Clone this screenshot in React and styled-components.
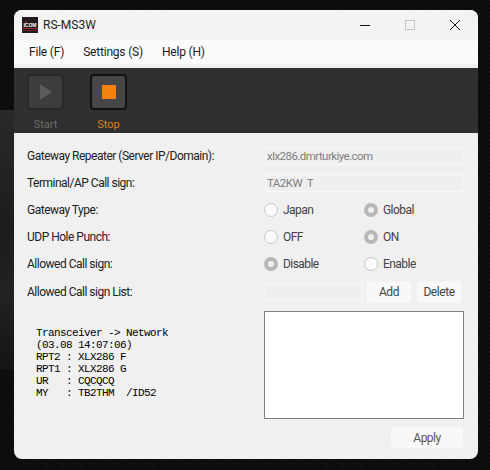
import React from 'react';
import styled, {createGlobalStyle} from 'styled-components'

const GlobalStyle = createGlobalStyle`
	html, body {
		margin: 0;
		padding: 0;
		width: 490px;
		height: 470px;
		overflow: hidden;
		background-color: #0d0d0d;
		background-image:
			linear-gradient(170deg, #2a2a2a, #1c1c1c 45%, #222 70%, #141414),
			repeating-linear-gradient(45deg, #111 0 1px, #0b0b0b 1px 3px);
		background-size: 14px 260px, auto;
		background-position: 0 110px, 0 0;
		background-repeat: no-repeat, repeat;
		font-family: Roboto, "Liberation Sans", sans-serif;
		font-size: 12px;
	}
`

const LOG_LINES = [
	'Transceiver -> Network',
	'(03.08 14:07:06)',
	'RPT2 : XLX286 F',
	'RPT1 : XLX286 G',
	'UR   : CQCQCQ',
	'MY   : TB2THM  /ID52',
]

const IcomLogo = () => (
	<svg width="16" height="16" viewBox="0 0 16 16">
		<rect width="16" height="16" fill="#231a1d" />
		<rect x="0" y="11" width="16" height="1" fill="#a3242c" />
		<rect x="0" y="13" width="16" height="1" fill="#6f1d24" />
		<circle cx="4" cy="5" r="0.8" fill="#d8343c" />
		<text x="8" y="10" textAnchor="middle" fontSize="5" fontWeight="700" fontFamily="Liberation Sans, sans-serif" fill="#fff">ICOM</text>
	</svg>
)

const Radio = ({label, checked}) => (
	<RadioItem>
		<RadioDot $checked={checked} />
		<RadioText>{label}</RadioText>
	</RadioItem>
)

const App = () => {
	return (
		<>
			<GlobalStyle />
			<Window>
				<TitleBar>
					<TitleLeft>
						<IcomLogo />
						<TitleText>RS-MS3W</TitleText>
					</TitleLeft>
					<WindowControls>
						<svg width="10" height="10" viewBox="0 0 10 10"><path d="M0 5.5H10" stroke="#111" strokeWidth="1" /></svg>
						<svg width="10" height="10" viewBox="0 0 10 10"><rect x="0.5" y="0.5" width="9" height="9" fill="none" stroke="#c4c4c4" /></svg>
						<svg width="10" height="10" viewBox="0 0 10 10"><path d="M0 0L10 10M10 0L0 10" stroke="#111" strokeWidth="1" /></svg>
					</WindowControls>
				</TitleBar>

				<MenuBar>
					<MenuItem>File (F)</MenuItem>
					<MenuItem>Settings (S)</MenuItem>
					<MenuItem>Help (H)</MenuItem>
				</MenuBar>

				<Toolbar>
					<ToolItem>
						<ToolButton>
							<svg width="12" height="16" viewBox="0 0 12 16"><path d="M0 0L12 8L0 16Z" fill="#5a5a5a" /></svg>
						</ToolButton>
						<ToolLabel>Start</ToolLabel>
					</ToolItem>
					<ToolItem>
						<ToolButton $active>
							<StopSquare />
						</ToolButton>
						<ToolLabel $active>Stop</ToolLabel>
					</ToolItem>
				</Toolbar>

				<Content>
					<Row>
						<Label>Gateway Repeater (Server IP/Domain):</Label>
						<FieldBox>xlx286.dmrturkiye.com</FieldBox>
					</Row>
					<Row>
						<Label>Terminal/AP Call sign:</Label>
						<FieldBox>TA2KW&nbsp;&nbsp;T</FieldBox>
					</Row>
					<Row>
						<Label>Gateway Type:</Label>
						<RadioGroup>
							<Radio label="Japan" />
							<Radio label="Global" checked />
						</RadioGroup>
					</Row>
					<Row>
						<Label>UDP Hole Punch:</Label>
						<RadioGroup>
							<Radio label="OFF" />
							<Radio label="ON" checked />
						</RadioGroup>
					</Row>
					<Row>
						<Label>Allowed Call sign:</Label>
						<RadioGroup>
							<Radio label="Disable" checked />
							<Radio label="Enable" />
						</RadioGroup>
					</Row>
					<Row>
						<Label>Allowed Call sign List:</Label>
						<ListControls>
							<ListField />
							<SmallButton>Add</SmallButton>
							<SmallButton>Delete</SmallButton>
						</ListControls>
					</Row>

					<LogArea>
						<LogText>
							{LOG_LINES.map(line => <div key={line}>{line}</div>)}
						</LogText>
						<ListBox />
					</LogArea>

					<Footer>
						<ApplyButton>Apply</ApplyButton>
					</Footer>
				</Content>
			</Window>
		</>
	);
};

const Window = styled.div`
	margin: 10px 0 0 14px;
	width: 464px;
	height: 449px;
	border-radius: 8px;
	overflow: hidden;
	display: flex;
	flex-direction: column;
	background-color: #f0f0f0;
`

const TitleBar = styled.div`
	height: 30px;
	flex: none;
	display: flex;
	align-items: center;
	justify-content: space-between;
	padding: 0 18px 0 8px;
	background-color: #f3f3f3;
`

const TitleLeft = styled.div`
	display: flex;
	align-items: center;
	gap: 5px;
`

const TitleText = styled.span`
	font-size: 12px;
	color: #222;
`

const WindowControls = styled.div`
	display: flex;
	align-items: center;
	gap: 35px;
`

const MenuBar = styled.div`
	height: 24px;
	flex: none;
	display: flex;
	align-items: center;
	gap: 19px;
	padding-left: 15px;
	margin-bottom: 4px;
	background-color: #fafafa;
`

const MenuItem = styled.span`
	font-size: 12px;
	letter-spacing: -0.2px;
	color: #1c1c1c;
`

const Toolbar = styled.div`
	height: 65px;
	flex: none;
	display: flex;
	gap: 26px;
	padding: 6px 0 0 13px;
	box-sizing: border-box;
	background-color: #303030;
`

const ToolItem = styled.div`
	width: 37px;
	display: flex;
	flex-direction: column;
	align-items: center;
	gap: 8px;
`

const ToolButton = styled.div`
	width: 37px;
	height: 36px;
	box-sizing: border-box;
	display: flex;
	align-items: center;
	justify-content: center;
	border-radius: 4px;
	background-color: ${p => p.$active ? '#474747' : '#3d3d3d'};
	border: 2px solid ${p => p.$active ? '#111' : '#292929'};
`

const StopSquare = styled.div`
	width: 14px;
	height: 14px;
	background-color: #f58113;
`

const ToolLabel = styled.span`
	font-size: 11px;
	color: ${p => p.$active ? '#d9801f' : '#6e6e6e'};
`

const Content = styled.div`
	flex: 1;
	padding: 9px 15px 0 13px;
`

const Row = styled.div`
	height: 27.2px;
	display: flex;
	align-items: center;
`

const Label = styled.span`
	width: 238px;
	flex: none;
	font-size: 12px;
	letter-spacing: -0.5px;
	color: #222;
`

const FieldBox = styled.div`
	width: 198px;
	height: 18px;
	box-sizing: border-box;
	padding-left: 1px;
	font-size: 11.5px;
	letter-spacing: -0.55px;
	line-height: 16px;
	color: #808080;
	border: 1px solid #f8f8f8;
	background-color: #efefef;
`

const RadioGroup = styled.div`
	display: grid;
	grid-template-columns: 100px 100px;
	margin-left: -1px;
`

const RadioItem = styled.div`
	display: flex;
	align-items: center;
	gap: 5px;
`

const RadioDot = styled.span`
	width: 14px;
	height: 14px;
	box-sizing: border-box;
	border-radius: 50%;
	background-color: ${p => p.$checked ? '#f0f0f0' : '#fafafa'};
	border: ${p => p.$checked ? '4px solid #b8b8b8' : '1px solid #c8c8c8'};
`

const RadioText = styled.span`
	font-size: 12px;
	letter-spacing: -0.55px;
	color: #444;
`

const ListControls = styled.div`
	display: flex;
	align-items: center;
	gap: 4px;
`

const ListField = styled.div`
	width: 98px;
	height: 18px;
	margin-right: -1px;
	box-sizing: border-box;
	border: 1px solid #f8f8f8;
	background-color: #efefef;
`

const SmallButton = styled.div`
	width: 46px;
	height: 22px;
	box-sizing: border-box;
	display: flex;
	align-items: center;
	justify-content: center;
	font-size: 12px;
	letter-spacing: -0.45px;
	color: #444;
	border-radius: 4px;
	background-color: #f8f8f8;
	border: 1px solid #f3f3f3;
`

const LogArea = styled.div`
	display: flex;
	justify-content: space-between;
	margin-top: 6px;
`

const LogText = styled.div`
	padding: 16px 0 0 9px;
	font-family: "Liberation Mono", monospace;
	font-size: 11px;
	letter-spacing: -0.6px;
	line-height: 12px;
	color: #000;
	white-space: pre;
`

const ListBox = styled.div`
	width: 200px;
	height: 108px;
	margin-right: -1px;
	box-sizing: border-box;
	background-color: #fff;
	border: 1px solid #808080;
`

const Footer = styled.div`
	display: flex;
	justify-content: flex-end;
	margin-top: 8px;
`

const ApplyButton = styled.div`
	width: 72px;
	height: 21px;
	display: flex;
	align-items: center;
	justify-content: center;
	font-size: 12px;
	letter-spacing: -0.5px;
	color: #555;
	border-radius: 4px;
	background-color: #f8f8f8;
`

export default App;
